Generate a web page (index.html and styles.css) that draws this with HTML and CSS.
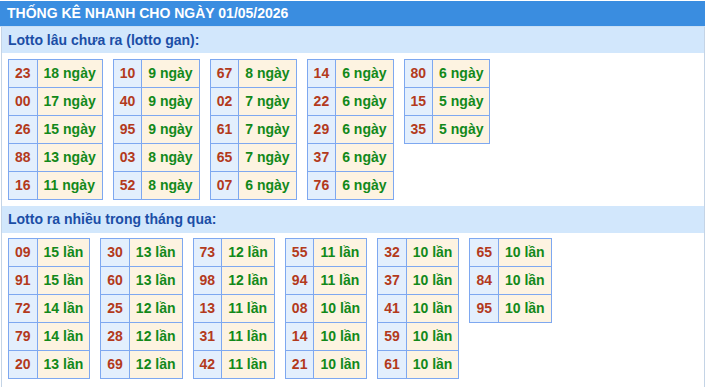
FILE: index.html
```html
<!DOCTYPE html>
<html lang="vi">
<head>
<meta charset="utf-8">
<link rel="stylesheet" href="styles.css">
</head>
<body>
<div class="page">
  <div class="header">THỐNG KÊ NHANH CHO NGÀY 01/05/2026</div>
  <div class="content">
    <div class="title">Lotto lâu chưa ra (lotto gan):</div>
    <div class="tables">
      <table><tr><td class="n">23</td><td class="v">18 ngày</td></tr><tr><td class="n">00</td><td class="v">17 ngày</td></tr><tr><td class="n">26</td><td class="v">15 ngày</td></tr><tr><td class="n">88</td><td class="v">13 ngày</td></tr><tr><td class="n">16</td><td class="v">11 ngày</td></tr></table>
      <table><tr><td class="n">10</td><td class="v">9 ngày</td></tr><tr><td class="n">40</td><td class="v">9 ngày</td></tr><tr><td class="n">95</td><td class="v">9 ngày</td></tr><tr><td class="n">03</td><td class="v">8 ngày</td></tr><tr><td class="n">52</td><td class="v">8 ngày</td></tr></table>
      <table><tr><td class="n">67</td><td class="v">8 ngày</td></tr><tr><td class="n">02</td><td class="v">7 ngày</td></tr><tr><td class="n">61</td><td class="v">7 ngày</td></tr><tr><td class="n">65</td><td class="v">7 ngày</td></tr><tr><td class="n">07</td><td class="v">6 ngày</td></tr></table>
      <table><tr><td class="n">14</td><td class="v">6 ngày</td></tr><tr><td class="n">22</td><td class="v">6 ngày</td></tr><tr><td class="n">29</td><td class="v">6 ngày</td></tr><tr><td class="n">37</td><td class="v">6 ngày</td></tr><tr><td class="n">76</td><td class="v">6 ngày</td></tr></table>
      <table><tr><td class="n">80</td><td class="v">6 ngày</td></tr><tr><td class="n">15</td><td class="v">5 ngày</td></tr><tr><td class="n">35</td><td class="v">5 ngày</td></tr></table>
    </div>
    <div class="title title2">Lotto ra nhiều trong tháng qua:</div>
    <div class="tables tables2">
      <table><tr><td class="n">09</td><td class="v">15 lần</td></tr><tr><td class="n">91</td><td class="v">15 lần</td></tr><tr><td class="n">72</td><td class="v">14 lần</td></tr><tr><td class="n">79</td><td class="v">14 lần</td></tr><tr><td class="n">20</td><td class="v">13 lần</td></tr></table>
      <table><tr><td class="n">30</td><td class="v">13 lần</td></tr><tr><td class="n">60</td><td class="v">13 lần</td></tr><tr><td class="n">25</td><td class="v">12 lần</td></tr><tr><td class="n">28</td><td class="v">12 lần</td></tr><tr><td class="n">69</td><td class="v">12 lần</td></tr></table>
      <table><tr><td class="n">73</td><td class="v">12 lần</td></tr><tr><td class="n">98</td><td class="v">12 lần</td></tr><tr><td class="n">13</td><td class="v">11 lần</td></tr><tr><td class="n">31</td><td class="v">11 lần</td></tr><tr><td class="n">42</td><td class="v">11 lần</td></tr></table>
      <table><tr><td class="n">55</td><td class="v">11 lần</td></tr><tr><td class="n">94</td><td class="v">11 lần</td></tr><tr><td class="n">08</td><td class="v">10 lần</td></tr><tr><td class="n">14</td><td class="v">10 lần</td></tr><tr><td class="n">21</td><td class="v">10 lần</td></tr></table>
      <table><tr><td class="n">32</td><td class="v">10 lần</td></tr><tr><td class="n">37</td><td class="v">10 lần</td></tr><tr><td class="n">41</td><td class="v">10 lần</td></tr><tr><td class="n">59</td><td class="v">10 lần</td></tr><tr><td class="n">61</td><td class="v">10 lần</td></tr></table>
      <table><tr><td class="n">65</td><td class="v">10 lần</td></tr><tr><td class="n">84</td><td class="v">10 lần</td></tr><tr><td class="n">95</td><td class="v">10 lần</td></tr></table>
    </div>
  </div>
</div>
</body>
</html>
```
FILE: styles.css
```css
html, body {
  margin: 0;
  padding: 0;
  background: #ffffff;
}
body {
  font-family: "Liberation Sans", Arial, sans-serif;
  font-size: 14px;
  font-weight: bold;
}
.page {
  width: 705px;
  padding-top: 1px;
}
.header {
  height: 25px;
  line-height: 25px;
  background: #3a8de0;
  color: #ffffff;
  padding-left: 7px;
  font-size: 14px;
  border-bottom: 1px solid #c9dff5;
}
.content {
  margin-left: 1px;
  width: 704px;
  box-sizing: border-box;
  border-left: 1px solid #c4d4e6;
  border-right: 1px solid #c4d4e6;
  padding-bottom: 8px;
}
.title {
  height: 26px;
  line-height: 26px;
  background: #d2e7fc;
  color: #1b4ea6;
  padding-left: 6px;
}
.title2 {
  height: 27px;
  line-height: 27px;
}
.tables {
  display: flex;
  align-items: flex-start;
  gap: 10px;
  padding: 6px 0 6px 6px;
}
.tables2 {
  padding-top: 5px;
  padding-bottom: 0;
}
table {
  border-collapse: collapse;
}
td {
  border: 1px solid #7ea8f0;
  padding: 5px 6px;
  line-height: 17px;
  white-space: nowrap;
}
td.n {
  background: #e3effd;
  color: #b33a1c;
}
td.v {
  background: #fdf3e1;
  color: #12891a;
}
```
